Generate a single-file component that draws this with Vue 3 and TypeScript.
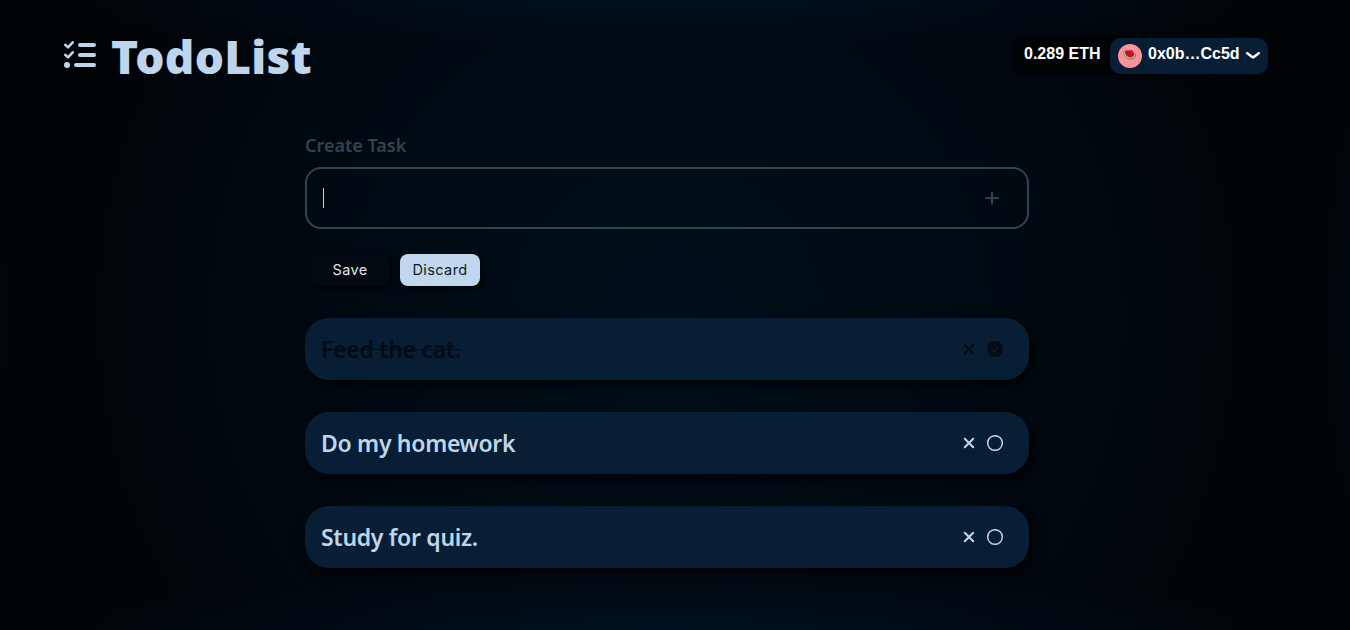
<script setup lang="ts">
interface Task {
  id: number
  title: string
  done: boolean
}

const balance = '0.289 ETH'
const account = '0x0b…Cc5d'

const tasks: Task[] = [
  { id: 1, title: 'Feed the cat.', done: true },
  { id: 2, title: 'Do my homework', done: false },
  { id: 3, title: 'Study for quiz.', done: false },
]
</script>

<template>
  <div class="page">
    <header class="header">
      <div class="brand">
        <svg class="brand-icon" viewBox="0 0 32 32" width="32" height="32">
          <g fill="none" stroke="currentColor" stroke-linecap="round">
            <path d="M16 6H30M16 16H30M12 26H30" stroke-width="4" />
            <path d="M1.3 5.9 4 8.4 8.7 3.3M1.3 15.9 4 18.4 8.7 13.3" stroke-width="2.6" stroke-linejoin="round" />
          </g>
          <circle cx="3" cy="26" r="3" fill="currentColor" />
        </svg>
        <h1 class="title">TodoList</h1>
      </div>
      <div class="wallet">
        <span class="balance">{{ balance }}</span>
        <button class="account">
          <span class="avatar">
            <svg viewBox="0 0 24 24" width="24" height="24">
              <path d="M5.5 7.6C5.4 12.6 8.4 15.6 12.3 15.4 15.8 15.2 18.1 13 17.9 10.2Z" fill="#527a35" />
              <path d="M6 7.4C6.1 12 8.8 14.6 12.4 14.4 15.4 14.3 17.3 12.4 17.2 10.2Z" fill="#e9dca0" />
              <path d="M6.7 6.7 13.8 6 16.6 10.1C16.2 12.2 14.6 13.5 12.3 13.5 9 13.5 6.8 10.8 6.7 6.7Z" fill="#be1931" />
              <path d="M9 8.4v.8M11.5 9.4v.8M10.6 11.4v.7M13.7 10.6v.8" stroke="#412018" stroke-width=".8" />
            </svg>
          </span>
          <span class="address">{{ account }}</span>
          <svg class="chevron" viewBox="0 0 14 7" width="14" height="7">
            <path d="M1.3 1.2 6.2 4.9a1.4 1.4 0 0 0 1.6 0L12.7 1.2" fill="none" stroke="#fff" stroke-width="2.5" stroke-linecap="round" />
          </svg>
        </button>
      </div>
    </header>

    <main class="content">
      <div class="label">Create Task</div>
      <div class="field">
        <span class="caret"></span>
        <svg class="plus" viewBox="0 0 14 14" width="14" height="14">
          <path d="M7 .5V13.5M.5 7H13.5" stroke="currentColor" stroke-width="2" />
        </svg>
      </div>
      <div class="actions">
        <button class="btn save">Save</button>
        <button class="btn discard">Discard</button>
      </div>
      <ul class="tasks">
        <li v-for="task in tasks" :key="task.id" class="task" :class="{ done: task.done }">
          <span class="task-title"><span class="task-text">{{ task.title }}</span></span>
          <svg class="remove" viewBox="0 0 12 12" width="12" height="12">
            <path d="M1.8 1.8 10.2 10.2M10.2 1.8 1.8 10.2" stroke="currentColor" stroke-width="2.1" stroke-linecap="round" />
          </svg>
          <svg class="check" viewBox="0 0 16 16" width="16" height="16">
            <template v-if="task.done">
              <circle cx="8" cy="8" r="8" fill="currentColor" />
              <path d="M4.6 8 7 10.4 11.4 5.8" fill="none" stroke="#081e34" stroke-width="1.5" />
            </template>
            <circle v-else cx="8" cy="8" r="7.3" fill="none" stroke="currentColor" stroke-width="1.45" />
          </svg>
        </li>
      </ul>
    </main>
  </div>
</template>

<style>
body {
  background: #000306;
  overflow: hidden;
}
</style>

<style scoped>
.page {
  box-sizing: border-box;
  height: 630px;
  padding: 36px 82px 0 64px;
  color: #bfd5eb;
  font-family: "Noto Sans", "Open Sans", sans-serif;
  background:
    radial-gradient(ellipse 700px 48px at 667px 0, rgba(0, 22, 40, 0.68), rgba(0, 18, 34, 0.26) 50%, transparent),
    radial-gradient(ellipse 700px 48px at 667px 100%, rgba(0, 22, 40, 0.68), rgba(0, 18, 34, 0.26) 50%, transparent),
    radial-gradient(ellipse 36px 315px at 0 50%, rgba(0, 6, 10, 0.7), transparent),
    radial-gradient(ellipse 40px 315px at 100% 50%, rgba(0, 8, 16, 0.8), transparent),
    radial-gradient(circle 667px at 667px 50%, #00101b, #000a12 48%, #00060d 74%, #000305);
}

.header {
  display: flex;
  justify-content: space-between;
  align-items: flex-start;
  height: 98px;
}

.brand {
  display: flex;
  gap: 15px;
}

.brand-icon {
  margin-top: 3px;
}

.title {
  margin: -12px 0 0;
  font-size: 46px;
  font-weight: 900;
  line-height: 64px;
  letter-spacing: 0.28px;
}

.wallet {
  display: flex;
  align-items: center;
  box-sizing: border-box;
  height: 39px;
  padding-left: 12px;
  border-radius: 12px;
  background: #000203;
  color: #fff;
  font: 700 16px "Liberation Sans", sans-serif;
}

.balance {
  width: 86px;
  padding-bottom: 4px;
  white-space: nowrap;
}

.account {
  display: flex;
  align-items: center;
  box-sizing: border-box;
  width: 158px;
  height: 36px;
  padding: 0 8px;
  border: 0;
  border-radius: 10px;
  background: #081e34;
  color: #fff;
  font: inherit;
}

.avatar {
  width: 24px;
  height: 24px;
  border-radius: 50%;
  background: #fe9299;
}

.avatar svg {
  display: block;
}

.address {
  width: 92px;
  margin: 0 6px;
  padding-bottom: 4px;
  text-align: left;
  white-space: nowrap;
}

.content {
  width: 724px;
  margin-left: 241px;
}

.label {
  margin-top: -1px;
  color: #314350;
  font-size: 18px;
  font-weight: 600;
  line-height: 24px;
}

.field {
  display: flex;
  align-items: center;
  justify-content: space-between;
  box-sizing: border-box;
  height: 62px;
  margin-top: 10px;
  padding: 0 28px 0 16px;
  border: 2px solid #314350;
  border-radius: 16px;
}

.caret {
  width: 1px;
  height: 20px;
  background: #c1d7ee;
}

.plus {
  color: #314350;
}

.actions {
  display: flex;
  gap: 10px;
  margin: 25px 0 32px 5px;
}

.btn {
  width: 80px;
  height: 32px;
  padding: 0 0 1px;
  border: 0;
  border-radius: 8px;
  box-shadow: 3px 3px 7px rgba(0, 0, 0, 0.75);
  font: 400 14.5px Inter, sans-serif;
  letter-spacing: 0.4px;
}

.save {
  background: #020911;
  color: #e1e3e5;
}

.discard {
  background: #c1d7ee;
  color: #101a24;
}

.tasks {
  display: flex;
  flex-direction: column;
  gap: 32px;
  margin: 0;
  padding: 0;
  list-style: none;
}

.task {
  display: flex;
  align-items: center;
  box-sizing: border-box;
  height: 62px;
  padding: 0 26px 0 16px;
  border-radius: 24px;
  background: #081e34;
  box-shadow: 4px 5px 14px rgba(0, 0, 0, 0.9);
}

.task-title {
  flex: 1;
  font-size: 23px;
  font-weight: 600;
  line-height: 32px;
  letter-spacing: -0.3px;
}

.done {
  color: #030b14;
}

.done .task-text {
  text-decoration: line-through;
  text-decoration-thickness: 1px;
}

.remove {
  margin-right: 12px;
}
</style>
